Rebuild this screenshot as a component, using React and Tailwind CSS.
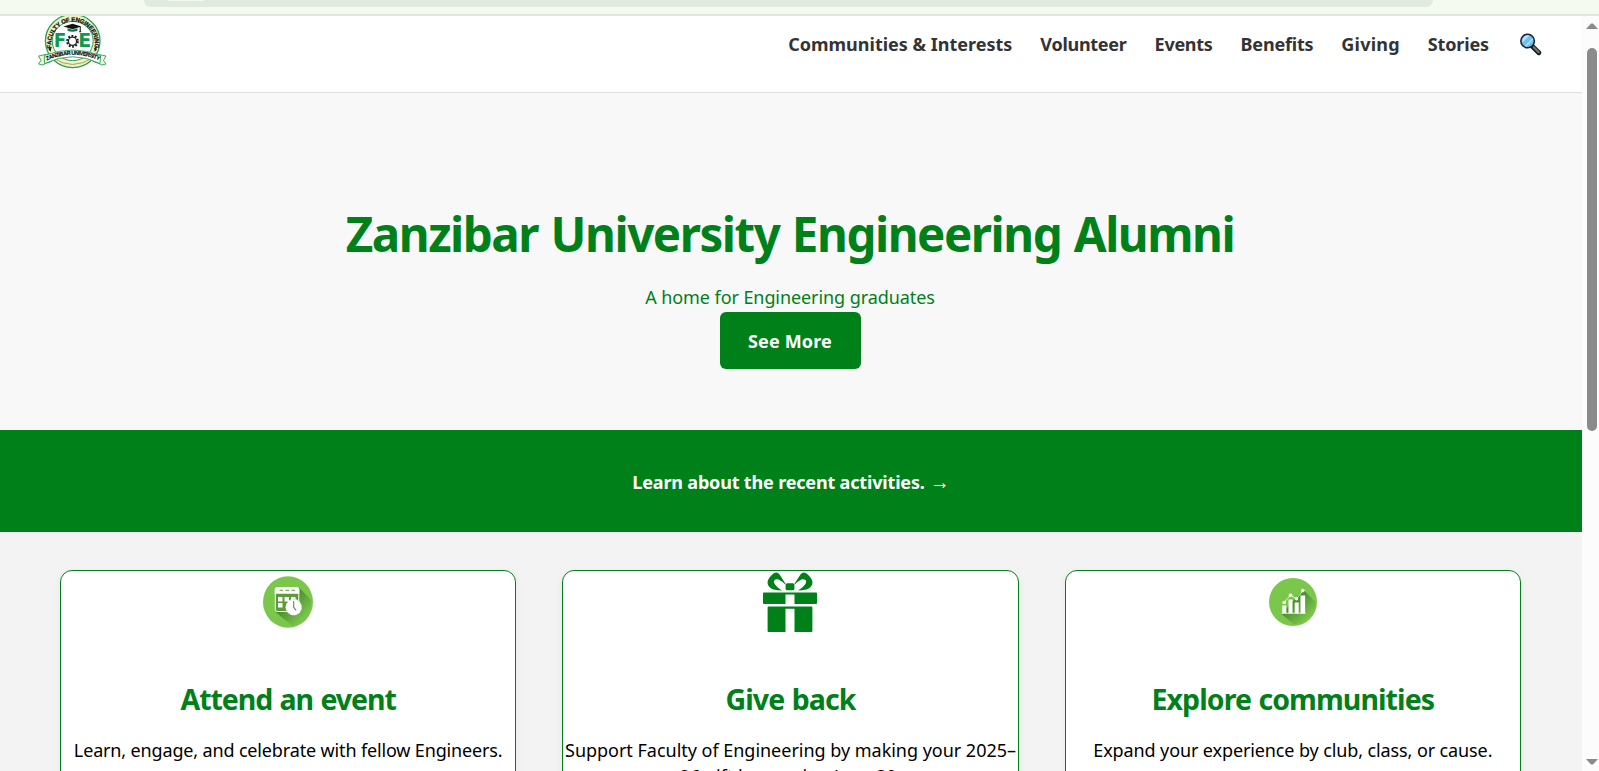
const NAV = [
  { label: "Communities & Interests", spacing: "tracking-[0px]" },
  { label: "Volunteer", spacing: "tracking-[-0.27px]" },
  { label: "Events", spacing: "tracking-[-0.28px]" },
  { label: "Benefits", spacing: "tracking-[-0.2px]" },
  { label: "Giving", spacing: "tracking-[0.2px]" },
  { label: "Stories", spacing: "tracking-[-0.13px]" },
];

function Logo() {
  return (
    <svg className="block h-[54px] w-[72px]" viewBox="0 0 72 54">
      <defs>
        <path id="arc-top" d="M16.6 35.5A21.8 22.2 0 1 1 57.4 35.5" />
        <path id="arc-ribbon" d="M8.5 45.500Q37 32 65.5 45.500" />
      </defs>
      <ellipse cx="36.7" cy="25" rx="27.3" ry="26.6" fill="#f3efc0" stroke="#23a35c" strokeWidth="1.3" />
      <ellipse cx="36.7" cy="25" rx="20.500" ry="19.6" fill="#fff" stroke="#23a35c" strokeWidth="1" />
      <path d="M16 41Q36 56 58 41" fill="none" stroke="#8a9355" strokeWidth=".8" />
      <text fontFamily="Liberation Sans" fontWeight="700" fontSize="6" fill="#111" stroke="#111" strokeWidth=".25">
        <textPath href="#arc-top" startOffset="50%" textAnchor="middle" textLength="78">FACULTY OF ENGINEERING</textPath>
      </text>
      <path d="M13.2 31l2.2 1.3-.8 3.4-2-2zM60.2 31l-2.2 1.3.8 3.4 2-2z" fill="#222" />
      <path d="M2.5 40l12-2.5 1 8-6 2-2.6 1.5-4.4-1 2.5-3.5zM70 40l-12-2.5-1 8 6 2 2.600 1.500 4.400-1-2.500-3.500z" fill="#f3f6d0" stroke="#23a35c" strokeWidth=".9" />
      <path d="M8.300 39.500Q37 28.500 64.500 39.500L64 47.500Q37 34 8.500 47.500z" fill="#fff" stroke="#23a35c" strokeWidth=".9" />
      <text fontFamily="Liberation Sans" fontWeight="700" fontSize="5.600" fill="#111" stroke="#111" strokeWidth=".2">
        <textPath href="#arc-ribbon" startOffset="50%" textAnchor="middle" textLength="54">ZANZIBAR UNIVERSITY</textPath>
      </text>
      <g fontFamily="DejaVu Sans" fontWeight="700" fontSize="19" fill="#0b9b4c">
        <text x="17.800" y="31.200" textLength="12.500" lengthAdjust="spacingAndGlyphs">F</text>
        <text x="42.300" y="31.200" textLength="13" lengthAdjust="spacingAndGlyphs">E</text>
      </g>
      <circle cx="36.500" cy="25.300" r="5.200" fill="none" stroke="#222" strokeWidth="2.400" strokeDasharray="1.800 1.467" />
      <circle cx="36.500" cy="25.300" r="4.100" fill="#fff" stroke="#222" strokeWidth="1.300" />
      <path d="M27.500 10.500l9-2.700 9 2.700-9 2.800z" fill="#111" />
      <path d="M31.500 12.200v2.600q5 2 10 0v-2.600l-5 1.500z" fill="#0b7a3d" />
      <path d="M44 11v4l-.7 1h1.800l-.7-1v-4" fill="#111" stroke="#111" strokeWidth=".5" />
    </svg>
  );
}

function Magnifier() {
  return (
    <svg className="ml-0.5 block h-[24px] w-[24px]" viewBox="0 0 24 24">
      <path d="M12.500 13.500l7.300 7.200" stroke="#15191b" strokeWidth="4.800" strokeLinecap="round" />
      <path d="M14.800 15.300l4.800 4.900" stroke="#67777a" strokeWidth="2.300" strokeLinecap="round" />
      <circle cx="8.600" cy="9" r="6.800" fill="#6fc0ee" stroke="#17222a" strokeWidth="1.500" />
      <path d="M3.600 10.500L10.500 3.500A5.800 5.800 0 0 0 3.600 10.500zM6 13.800L13.500 6.200l.7 1.400-6.800 7z" fill="#b5e0f8" />
    </svg>
  );
}

function EventIcon() {
  return (
    <svg className="block h-[60px] w-[60px]" viewBox="0 0 60 60">
      <defs>
        <linearGradient id="shade-e" x1="0" y1="0" x2="1" y2="1">
          <stop offset=".35" stopColor="#4b8a2f" />
          <stop offset=".8" stopColor="#7ac74b" />
        </linearGradient>
      </defs>
      <ellipse cx="30" cy="31" rx="25" ry="25.700" fill="#7ac74b" />
      <path d="M41 16.500l12 12.500Q53 45 42 52L34.500 55L17.500 41z" fill="url(#shade-e)" />
      <rect x="17.300" y="16.500" width="23.500" height="24" rx="2" fill="#5c9b3c" stroke="#fff" strokeWidth="1" />
      <path d="M16.800 22.800v-4.300a2.500 2.500 0 0 1 2.500-2.500h19.500a2.500 2.500 0 0 1 2.500 2.500v4.300z" fill="#fff" />
      <path d="M21.500 19.300h3.500M27.500 19.300h3.500M33.500 19.300h3.500" stroke="#5c9b3c" strokeWidth="1" />
      <path d="M20 26h4.500v4.500H20zM26.500 26H31v4.500h-4.500zM33 26h4.500v4.500H33zM20 32h4.500v4.500H20z" fill="#fff" />
      <circle cx="35.700" cy="36.300" r="8.200" fill="#fff" />
      <circle cx="35.700" cy="36.300" r="7.800" fill="none" stroke="#6fa753" strokeWidth=".7" strokeDasharray=".7 3.384" />
      <path d="M35.700 30v6.300l2.500 3" fill="none" stroke="#5c8a45" strokeWidth="1.100" />
    </svg>
  );
}

function GiftIcon() {
  return (
    <svg className="block h-[60px] w-[60px] translate-y-px" viewBox="0 0 60 60" fill="#008018">
      <path d="M4 20.600h52q1 0 1 1v9.400q0 1-1 1H34.500v-9.400h-9V32H4q-1 0-1-1v-9.400q0-1 1-1z" />
      <path d="M8.600 34.400h42.800q1 0 1 1V59q0 1-1 1H34.500V36.700h-9V60H8.600q-1 0-1-1V35.400q0-1 1-1z" />
      <rect x="25.600" y="11.300" width="8.800" height="7" rx="1.600" />
      <path fillRule="evenodd" d="M25.500 11.800L19.600 2.600Q16.500-1.500 12.500 2.300Q5 9.500 8.800 14.200Q11.800 18.600 22 18.600L19 16.500Q11.500 10 15 7.800Q18.300 5.500 25.500 12.800z" />
      <path fillRule="evenodd" d="M34.500 11.800L40.400 2.600Q43.500-1.500 47.500 2.300Q55 9.500 51.200 14.200Q48.200 18.600 38 18.600L41 16.500Q48.500 10 45 7.800Q41.700 5.500 34.500 12.800z" />
    </svg>
  );
}

function ChartIcon() {
  return (
    <svg className="block h-[60px] w-[60px]" viewBox="0 0 60 60">
      <defs>
        <linearGradient id="shade-c" x1="0" y1="0" x2="1" y2="1">
          <stop offset=".35" stopColor="#4b8a2f" />
          <stop offset=".8" stopColor="#7ac74b" />
        </linearGradient>
      </defs>
      <circle cx="30" cy="31" r="24" fill="#7ac74b" />
      <path d="M40.500 18.500l12 13Q51 46 37.500 52.500L30.500 53L18.500 43z" fill="url(#shade-c)" />
      <path d="M18.500 42.300h24" stroke="#fff" strokeWidth=".8" />
      <path d="M19.300 34.500h4v7.800h-4zM25.500 28.500h4v13.800h-4zM31.700 31.500h4v10.800h-4zM37.500 24.500h4.600v17.800h-4.600z" fill="#fff" />
      <path d="M21 31.500l6.500-7.500 6 4 6.500-8.500" fill="none" stroke="#fff" strokeWidth=".8" />
      <g fill="#fff"><circle cx="21.200" cy="31.500" r="1.800" /><circle cx="27.500" cy="24.200" r="1.800" /><circle cx="33.500" cy="27.800" r="1.700" /><circle cx="39.800" cy="19.600" r="1.800" /></g>
    </svg>
  );
}

const CARDS = [
  { icon: EventIcon, title: "Attend an event", text: "Learn, engage, and celebrate with fellow Engineers.", heading: "tracking-[-1.05px] [word-spacing:1px]", body: "tracking-[-0.15px]" },
  { icon: GiftIcon, title: "Give back", text: "Support Faculty of Engineering by making your 2025–26 gift by evening June 30.", heading: "tracking-[-0.95px] [word-spacing:1px]", body: "tracking-[-0.02px]" },
  { icon: ChartIcon, title: "Explore communities", text: "Expand your experience by club, class, or cause.", heading: "tracking-[-0.93px] [word-spacing:1px]", body: "tracking-[-0.11px]" },
];

export default function App() {
  return (
    <div className="flex h-[771px] w-[1599px] flex-col overflow-hidden bg-white font-['Noto_Sans','Open_Sans',sans-serif]">
      <div className="h-4 shrink-0 border-b-2 border-[#dde6d8] bg-[#f4faf0]">
        <div className="ml-[144px] h-[7px] w-[1289px] rounded-b-[14px] bg-[#e0eadf] pl-6">
          <div className="h-[1px] w-9 rounded-b bg-[#f4faf0]" />
        </div>
      </div>
      <div className="flex min-h-0 flex-1">
        <main className="flex w-[1582px] flex-col overflow-hidden">
          <header className="flex h-[77px] shrink-0 items-start justify-between border-b border-[#dddddd] bg-white pl-[36px] pr-[39px]">
            <Logo />
            <nav className="mt-4 flex h-6 items-center gap-7 text-[18px] font-bold leading-6 text-[#333333]">
              {NAV.map((n) => (
                <a key={n.label} className={n.spacing}>{n.label}</a>
              ))}
              <Magnifier />
            </nav>
          </header>
          <section className="flex h-[337px] shrink-0 flex-col items-center bg-[#f8f8f8] pr-0.5 pt-[107px] text-[#008018]">
            <h1 className="whitespace-nowrap text-[47.5px] font-bold leading-[68px] tracking-[-1.47px] [word-spacing:1.6px]">Zanzibar University Engineering Alumni</h1>
            <p className="mt-[16px] text-[18px] leading-[26px] tracking-[-0.08px]">A home for Engineering graduates</p>
            <button className="mt-[2px] h-[57px] w-[141px] rounded-md bg-[#008018] pt-0.5 text-[18px] font-bold tracking-[0.15px] text-white">See More</button>
          </section>
          <section className="flex h-[102px] shrink-0 items-center justify-center gap-[5px] bg-[#008018] pb-0 pt-0.5 text-[18px] font-bold text-white">
            <span className="tracking-[-0.17px]">Learn about the recent activities.</span>
            <span className="text-[20px] font-normal leading-6">→</span>
          </section>
          <section className="grid min-h-0 flex-1 grid-cols-3 gap-[46px] overflow-hidden bg-[#f3f3f3] pl-[60px] pr-[61px] pt-[38px]">
            {CARDS.map((c) => (
              <article key={c.title} className="flex h-[300px] flex-col items-center rounded-xl border border-[#008018] bg-white text-center shadow-[0_2px_8px_rgba(0,0,0,0.05)]">
                <c.icon />
                <h2 className={`mt-[48px] whitespace-nowrap text-[28.5px] font-bold leading-[40px] text-[#008018] ${c.heading}`}>{c.title}</h2>
                <p className={`mt-[18px] text-[18px] leading-[26px] text-black ${c.body}`}>{c.text}</p>
              </article>
            ))}
          </section>
        </main>
        <aside className="flex w-[17px] flex-col items-center bg-[#fcfcfc] pb-[6px] pl-[2px] pt-[7px]">
          <svg className="h-[6px] w-3 shrink-0" viewBox="0 0 12 6"><path d="M0 6L5 .5h2L12 6z" fill="#8b8b8b" /></svg>
          <div className="mt-[19px] h-[383px] w-[10px] shrink-0 rounded-full bg-[#8b8b8b]" />
          <svg className="mt-auto h-[6px] w-3 shrink-0" viewBox="0 0 12 6"><path d="M0 0L5 5.500h2L12 0z" fill="#8b8b8b" /></svg>
        </aside>
      </div>
    </div>
  );
}
